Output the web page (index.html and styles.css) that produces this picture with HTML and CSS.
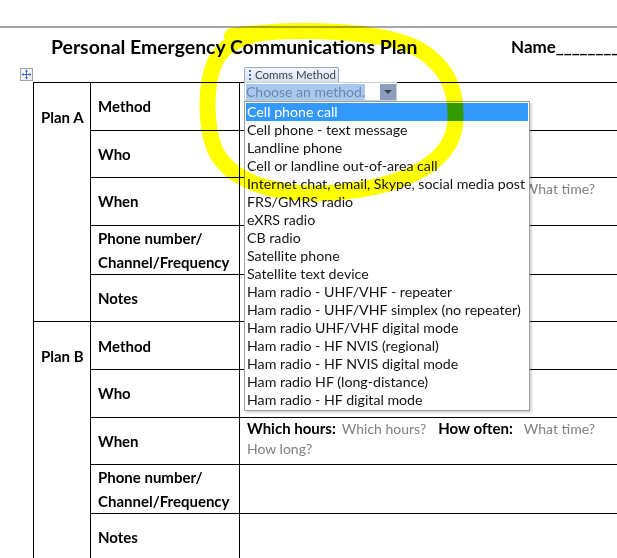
FILE: index.html
```html
<!DOCTYPE html>
<html lang="en">
<head>
<meta charset="utf-8">
<title>Personal Emergency Communications Plan</title>
<link rel="stylesheet" href="styles.css">
</head>
<body>
<div class="page">
  <div class="ruler"></div>
  <header class="doc-head">
    <h1 class="title">Personal Emergency Communications Plan</h1>
    <div class="name">Name______________</div>
  </header>

  <div class="table-wrap">
    <span class="move-handle">
      <svg viewBox="0 0 11 11" width="11" height="11">
        <path d="M5.5 1 L5.5 10 M1 5.5 L10 5.5" stroke="#3d6cc4" stroke-width="1" fill="none"/>
        <path d="M5.5 0.5 L3.8 2.4 L7.2 2.4 Z M5.5 10.5 L3.8 8.6 L7.2 8.6 Z M0.5 5.5 L2.4 3.8 L2.4 7.2 Z M10.5 5.5 L8.6 3.8 L8.6 7.2 Z" fill="#3d6cc4"/>
      </svg>
    </span>
    <table class="plan">
      <colgroup><col class="c1"><col class="c2"><col class="c3"></colgroup>
      <tbody>
        <tr>
          <td class="plan-label" rowspan="5">Plan A</td>
          <td class="label">Method</td>
          <td class="value cc-cell">
            <div class="cc">
              <div class="cc-tab">
                <svg class="grip" viewBox="0 0 2 10" width="2" height="10"><rect x="0" y="0" width="2" height="2" fill="#3f6fc0"/><rect x="0" y="4" width="2" height="2" fill="#3f6fc0"/><rect x="0" y="8" width="2" height="2" fill="#3f6fc0"/></svg>
                <span>Comms Method</span>
              </div>
              <div class="cc-box">
                <span class="cc-ph">Choose an method.</span>
                <span class="cc-btn"><span class="tri"></span></span>
              </div>
              <ul class="dd">
                <li class="sel">Cell phone call</li>
                <li>Cell phone - text message</li>
                <li>Landline phone</li>
                <li>Cell or landline out-of-area call</li>
                <li>Internet chat, email, Skype, social media post</li>
                <li>FRS/GMRS radio</li>
                <li>eXRS radio</li>
                <li>CB radio</li>
                <li>Satellite phone</li>
                <li>Satellite text device</li>
                <li>Ham radio - UHF/VHF - repeater</li>
                <li>Ham radio - UHF/VHF simplex (no repeater)</li>
                <li>Ham radio UHF/VHF digital mode</li>
                <li>Ham radio - HF NVIS (regional)</li>
                <li>Ham radio - HF NVIS digital mode</li>
                <li>Ham radio HF (long-distance)</li>
                <li>Ham radio - HF digital mode</li>
              </ul>
            </div>
          </td>
        </tr>
        <tr><td class="label">Who</td><td class="value"></td></tr>
        <tr>
          <td class="label">When</td>
          <td class="value when">
            <div class="when-line"><b class="k">Which hours:</b><span class="ph ph1">Which hours?</span><b class="k k2">How often:</b><span class="ph ph2">What time?</span></div>
            <div class="when-line"><span class="ph">How long?</span></div>
          </td>
        </tr>
        <tr><td class="label">Phone number/<br>Channel/Frequency</td><td class="value"></td></tr>
        <tr><td class="label">Notes</td><td class="value"></td></tr>

        <tr>
          <td class="plan-label" rowspan="5">Plan B</td>
          <td class="label">Method</td>
          <td class="value"></td>
        </tr>
        <tr><td class="label">Who</td><td class="value"></td></tr>
        <tr>
          <td class="label">When</td>
          <td class="value when">
            <div class="when-line"><b class="k">Which hours:</b><span class="ph ph1">Which hours?</span><b class="k k2">How often:</b><span class="ph ph2">What time?</span></div>
            <div class="when-line"><span class="ph">How long?</span></div>
          </td>
        </tr>
        <tr><td class="label">Phone number/<br>Channel/Frequency</td><td class="value"></td></tr>
        <tr><td class="label">Notes</td><td class="value"></td></tr>
      </tbody>
    </table>
  </div>
</div>

<svg class="highlight" viewBox="0 0 617 558" width="617" height="558" aria-hidden="true">
  <path d="M232 36 C290 28, 380 28, 420 50 C450 68, 458 95, 455 125 C450 165, 400 188, 330 193 C270 196, 230 180, 215 150 C205 125, 205 85, 215 62 C222 48, 235 38, 262 33"
        fill="none" stroke="#ffff00" stroke-width="16" stroke-linecap="round" stroke-linejoin="round"/>
</svg>
</body>
</html>
```

FILE: styles.css
```css
html, body {
  margin: 0;
  padding: 0;
  background: #ffffff;
  overflow: hidden;
}

body {
  position: relative;
  width: 617px;
  height: 558px;
  font-family: Lato, "Open Sans", sans-serif;
  color: #000;
}

.page {
  padding-top: 26px;
}

.ruler {
  height: 2px;
  background: #a6a6a6;
}

.doc-head {
  display: grid;
  grid-template-columns: 460px 1fr;
  padding: 7px 0 0 51px;
  height: 54px;
  box-sizing: border-box;
  white-space: nowrap;
  overflow: hidden;
}

.title {
  margin: 0;
  font-size: 19.4px;
  line-height: 24px;
  font-weight: 700;
}

.name {
  font-size: 17px;
  line-height: 24px;
  font-weight: 700;
}

.table-wrap {
  position: relative;
  margin-left: 33px;
}

.move-handle {
  position: absolute;
  left: -13px;
  top: -14px;
  width: 11px;
  height: 11px;
  border: 1px solid #9da3ad;
  background: #f3f5f8;
  display: flex;
}

.plan {
  border-collapse: collapse;
  table-layout: fixed;
  width: 640px;
}

.c1 { width: 57px; }
.c2 { width: 149px; }
.c3 { width: 434px; }

.plan td {
  border: 1px solid #000;
  padding: 0;
}

.plan tr {
  height: 47.6px;
}

.plan-label {
  vertical-align: top;
  padding: 24px 0 0 7px !important;
  font-size: 15px;
  font-weight: 700;
  line-height: 20px;
}

.label {
  vertical-align: middle;
  padding-left: 7px !important;
  font-size: 15px;
  font-weight: 700;
  line-height: 24px;
  white-space: nowrap;
}

.value {
  vertical-align: top;
  padding: 0 0 0 7px !important;
}

.cc-cell {
  padding: 0 0 0 4px !important;
}

.cc {
  position: relative;
  z-index: 2;
  margin-top: -1px;
  width: 153px;
}

.cc-tab {
  position: absolute;
  left: 0;
  top: -15px;
  width: 95px;
  height: 15px;
  box-sizing: border-box;
  border: 1px solid #9eabc0;
  border-bottom: none;
  border-radius: 2px 2px 0 0;
  background: linear-gradient(#f2f5fa, #d9e1ee);
  display: flex;
  align-items: center;
  gap: 4px;
  padding-left: 4px;
  font-size: 11.5px;
  line-height: 14px;
  color: #3b4352;
  white-space: nowrap;
  overflow: hidden;
}

.cc-box {
  display: flex;
  align-items: center;
  height: 19px;
  box-sizing: border-box;
  border: 1px solid #c3cfe0;
  background: #fff;
  padding: 0 0 0 1px;
}

.cc-ph {
  height: 16px;
  line-height: 16px;
  background: #a9c8ee;
  color: #6b86ad;
  font-size: 14px;
  white-space: nowrap;
}

.cc-btn {
  margin-left: auto;
  width: 16px;
  height: 16px;
  background: #8c9ebd;
  display: flex;
  align-items: center;
  justify-content: center;
}

.tri {
  width: 0;
  height: 0;
  border-left: 4px solid transparent;
  border-right: 4px solid transparent;
  border-top: 4px solid #3a3f48;
}

.dd {
  position: absolute;
  top: 19px;
  left: 0;
  width: 286px;
  box-sizing: border-box;
  margin: 0;
  padding: 1px;
  list-style: none;
  background: #fff;
  border: 1px solid #9a9ea6;
  box-shadow: 2px 2px 2px rgba(0, 0, 0, 0.16);
}

.dd li {
  height: 18px;
  line-height: 18px;
  padding-left: 1px;
  font-size: 14.2px;
  color: #141414;
  white-space: nowrap;
}

.dd li.sel {
  background: #3399ff;
  color: #fff;
}

.when-line {
  height: 20px;
  line-height: 20px;
  white-space: nowrap;
}

.k {
  font-size: 15px;
  font-weight: 700;
}

.k2 {
  margin-left: 12px;
}

.ph {
  font-size: 14px;
  color: #808080;
}

.ph1 {
  margin-left: 6px;
}

.ph2 {
  margin-left: 11px;
}

.highlight {
  position: absolute;
  left: 0;
  top: 0;
  pointer-events: none;
  mix-blend-mode: multiply;
  z-index: 5;
}
```
